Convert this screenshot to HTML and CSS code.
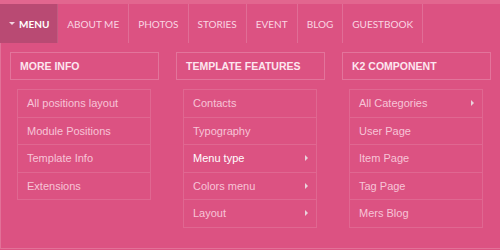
FILE: index.html
```html
<!DOCTYPE html>
<html lang="en">
<head>
  <meta charset="UTF-8">
  <title>Mega Menu</title>
  <link rel="stylesheet" href="styles.css">
</head>
<body>
  <div class="topline"></div>
  <nav class="mainnav">
    <ul>
      <li class="active"><span class="caret"></span>MENU</li>
      <li>ABOUT ME</li>
      <li>PHOTOS</li>
      <li>STORIES</li>
      <li>EVENT</li>
      <li>BLOG</li>
      <li>GUESTBOOK</li>
    </ul>
  </nav>

  <div class="mega">
    <div class="col">
      <h3 class="col-title">MORE INFO</h3>
      <ul class="sub">
        <li>All positions layout</li>
        <li>Module Positions</li>
        <li>Template Info</li>
        <li>Extensions</li>
      </ul>
    </div>
    <div class="col">
      <h3 class="col-title">TEMPLATE FEATURES</h3>
      <ul class="sub">
        <li>Contacts</li>
        <li>Typography</li>
        <li class="current parent">Menu type</li>
        <li class="parent">Colors menu</li>
        <li class="parent">Layout</li>
      </ul>
    </div>
    <div class="col">
      <h3 class="col-title">K2 COMPONENT</h3>
      <ul class="sub">
        <li class="parent">All Categories</li>
        <li>User Page</li>
        <li>Item Page</li>
        <li>Tag Page</li>
        <li>Mers Blog</li>
      </ul>
    </div>
  </div>
</body>
</html>
```
FILE: styles.css
```css
html, body {
  margin: 0;
  padding: 0;
  height: 100%;
  overflow: hidden;
  background: #dc5282;
  font-family: "Liberation Sans", Arial, sans-serif;
}

.topline {
  height: 4px;
  background: #e2668f;
}

.mainnav ul {
  list-style: none;
  margin: 0;
  padding: 0;
  display: flex;
  height: 39px;
}

.mainnav li {
  display: flex;
  align-items: center;
  padding: 0 9px;
  border-right: 1px solid rgba(255, 255, 255, 0.16);
  font-family: "Lato", sans-serif;
  font-size: 10px;
  color: #fad6e3;
}

.mainnav li.active {
  background: #b94a73;
  color: #fff;
  font-weight: bold;
  padding: 0 8px 0 9px;
  border-right-color: rgba(255, 255, 255, 0.1);
}

.caret {
  width: 0;
  height: 0;
  border-left: 3px solid transparent;
  border-right: 3px solid transparent;
  border-top: 3px solid #f3d4e0;
  margin-right: 4px;
}

.mega {
  display: flex;
  gap: 17px;
  padding: 9px 0 0 9px;
  height: 196px;
  border-left: 1px solid rgba(255, 255, 255, 0.18);
  border-bottom: 1px solid rgba(255, 255, 255, 0.18);
}

.col {
  width: 149px;
}

.col-title {
  margin: 0;
  height: 26px;
  line-height: 26px;
  padding-left: 9px;
  border: 1px solid rgba(255, 255, 255, 0.2);
  font-size: 10.5px;
  font-weight: bold;
  color: #fde6ef;
}

.sub {
  list-style: none;
  margin: 9px 8px 0 7px;
  padding: 0;
  border: 1px solid rgba(255, 255, 255, 0.12);
}

.sub li {
  position: relative;
  height: 26.5px;
  line-height: 26.5px;
  padding-left: 9px;
  font-size: 11px;
  color: #f7c4d7;
  border-top: 1px solid rgba(255, 255, 255, 0.12);
}

.sub li:first-child {
  border-top: none;
}

.sub li.current {
  color: #fff;
}

.sub li.parent::after {
  content: "";
  position: absolute;
  right: 8px;
  top: 10px;
  border-top: 3px solid transparent;
  border-bottom: 3px solid transparent;
  border-left: 3px solid #e9d3dc;
}
```
